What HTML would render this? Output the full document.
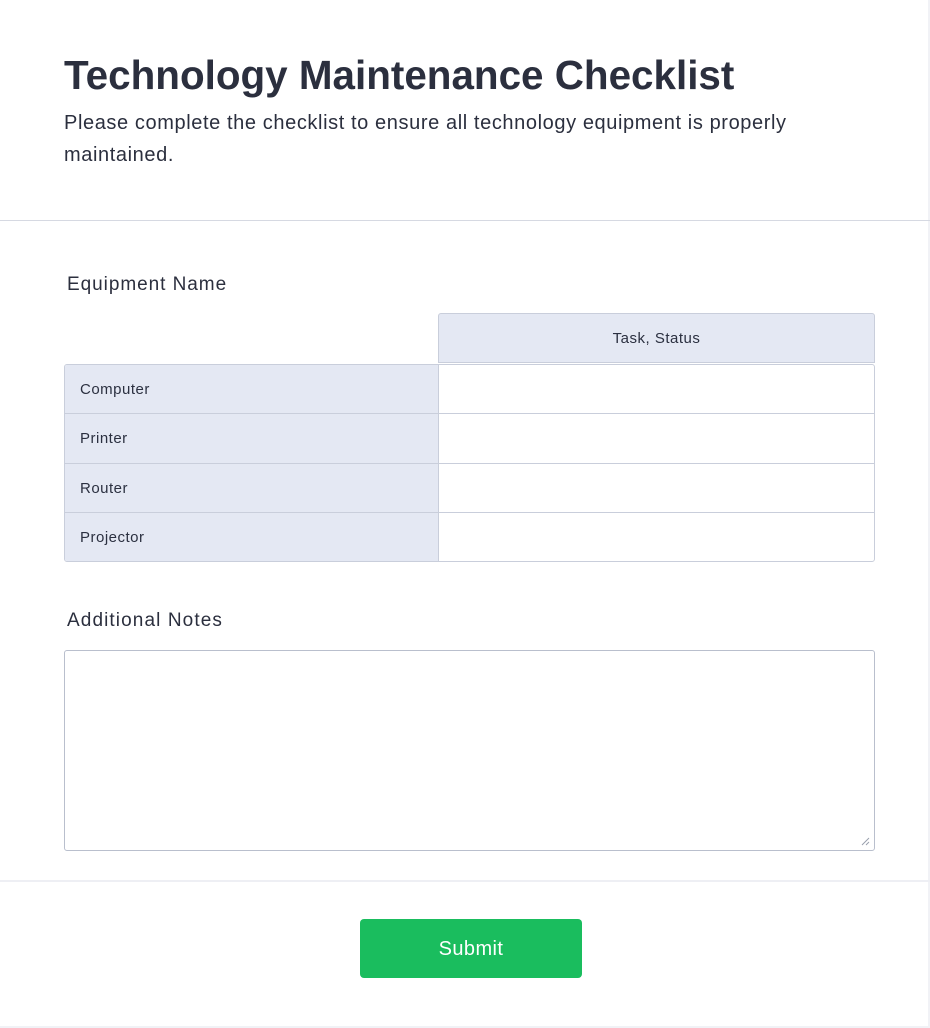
<!DOCTYPE html>
<html><head><style>
*{box-sizing:border-box;margin:0;padding:0}
body{width:930px;height:1028px;background:#fff;font-family:"Liberation Sans",sans-serif;color:#2b3040;position:relative;overflow:hidden}
.edge{position:absolute;right:0;top:0;width:2px;height:1028px;background:#f1f2f6}
.edgeb{position:absolute;left:0;bottom:0;width:930px;height:2px;background:#f1f2f6}
h1{position:absolute;left:64px;top:52px;font-size:40.4px;font-weight:bold;letter-spacing:0;color:#2b2f3e;white-space:nowrap}
.sub{position:absolute;left:64px;top:107px;width:780px;font-size:20px;letter-spacing:0.6px;line-height:32px;color:#2b2f3e}
.hr1{position:absolute;left:0;top:220px;width:930px;height:1px;background:#d6d9e2}
.lbl{position:absolute;left:67px;font-size:19px;color:#2b2f3e}
.th{position:absolute;left:438px;top:313px;width:437px;height:50px;background:#e4e8f3;border:1px solid #c9cedb;border-radius:3px 3px 0 0;font-size:15px;letter-spacing:0.5px;text-align:center;line-height:50px}
.tbl{position:absolute;left:64px;top:364px;width:811px;height:198px;border:1px solid #c9cedb;border-radius:3px;overflow:hidden}
.row{height:49.25px;border-bottom:1px solid #c9cedb;display:flex}
.row:last-child{border-bottom:none}
.row .c1{width:374px;background:#e4e8f3;border-right:1px solid #c9cedb;font-size:15px;letter-spacing:0.5px;padding-left:15px;line-height:50px}
.ta{position:absolute;left:64px;top:650px;width:811px;height:201px;border:1px solid #b9bfcd;border-radius:3px}
.hr2{position:absolute;left:0;top:880px;width:930px;height:2px;background:#eeeff4}
.btn{position:absolute;left:360px;top:919px;width:222px;height:59px;background:#1abd5e;border-radius:4px;color:#fff;font-size:20px;letter-spacing:0.4px;text-align:center;line-height:60px}
</style></head><body>
<div class="edge"></div><div class="edgeb"></div>
<h1>Technology Maintenance Checklist</h1>
<div class="sub">Please complete the checklist to ensure all technology equipment is properly maintained.</div>
<div class="hr1"></div>
<div class="lbl" style="top:274px;letter-spacing:0.95px">Equipment Name</div>
<div class="th">Task, Status</div>
<div class="tbl">
<div class="row"><div class="c1">Computer</div></div>
<div class="row"><div class="c1">Printer</div></div>
<div class="row"><div class="c1">Router</div></div>
<div class="row"><div class="c1">Projector</div></div>
</div>
<div class="lbl" style="top:610px;letter-spacing:1.1px">Additional Notes</div>
<div class="ta"><svg style="position:absolute;right:4px;bottom:4px" width="9" height="9"><path d="M8 1L1 8M8 5L5 8" stroke="#9aa0ad" stroke-width="1"/></svg></div>
<div class="hr2"></div>
<div class="btn">Submit</div>
</body></html>
